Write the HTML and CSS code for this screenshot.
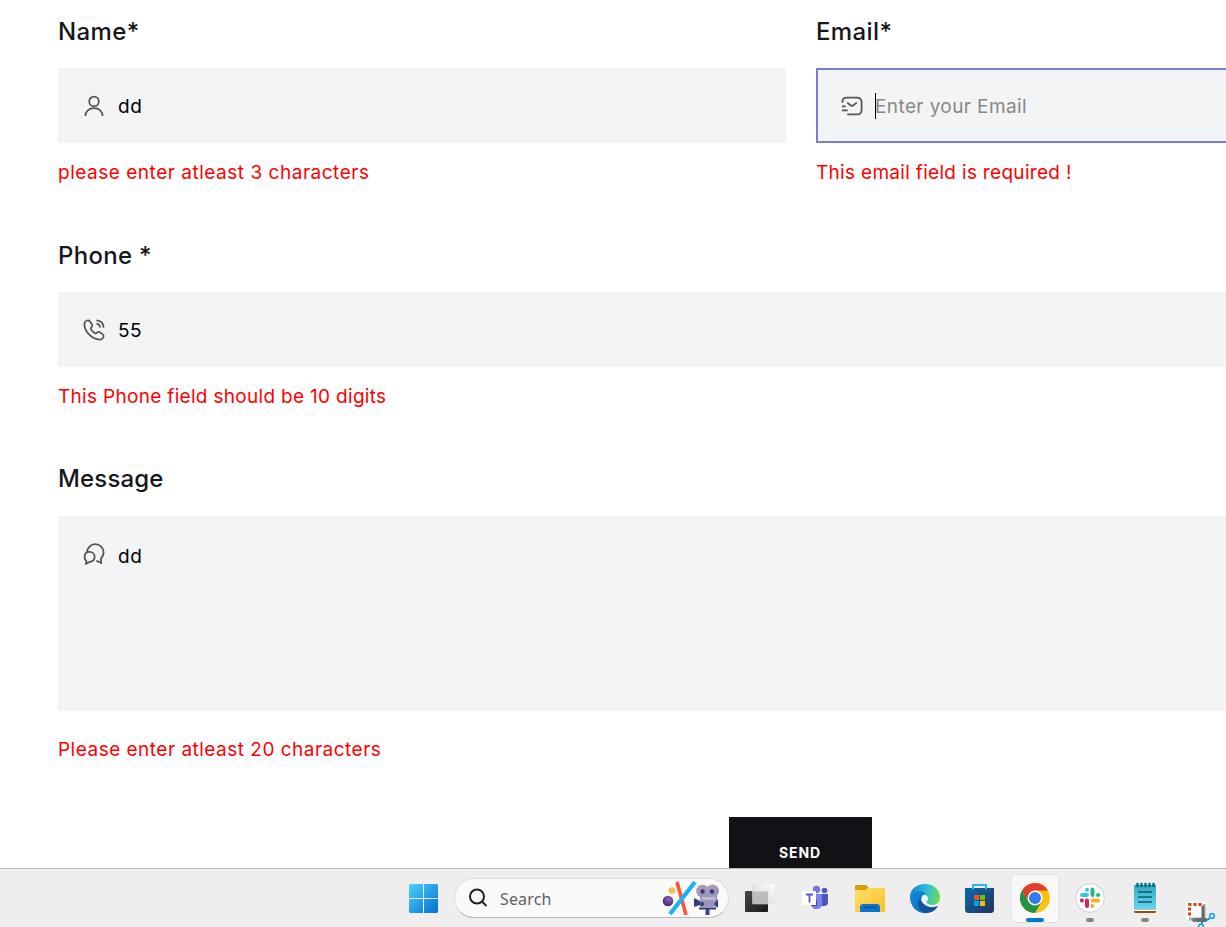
FILE: index.html
```html
<!DOCTYPE html>
<html lang="en">
<head>
<meta charset="utf-8">
<title>Contact form</title>
<link rel="stylesheet" href="styles.css">
</head>
<body>
<main class="page">
  <form class="form">
    <div class="row">
      <div class="group">
        <label class="label label-name">Name*</label>
        <div class="field">
          <svg class="icon" viewBox="-.5 -.5 25 25"><circle cx="12" cy="7.200" r="5"/><path d="M3 22.500c0-5 3.800-8.300 9-8.300s9 3.300 9 8.300"/></svg>
          <span class="value">dd</span>
        </div>
        <p class="error error-name">please enter atleast 3 characters</p>
      </div>
      <div class="group">
        <label class="label label-email">Email*</label>
        <div class="field focused">
          <svg class="icon" viewBox="-.5 -.5 25 25"><path d="M2 8.500V7.500c0-3 1.700-4.300 4.500-4.300H17c3 0 5 1.500 5 5v7.600c0 3.500-2 5-5 5H7M7 8.500l3.300 2.700c.9.700 2.200.7 3 0l3.700-2.700M1.500 16.500h6M1.500 12.300h4"/></svg>
          <span class="caret"></span><span class="placeholder">Enter your Email</span>
        </div>
        <p class="error error-email">This email field is required !</p>
      </div>
    </div>
    <div class="group">
      <label class="label label-phone">Phone *</label>
      <div class="field">
        <svg class="icon" viewBox="-.5 -.5 25 25"><path d="M22 18.300c0 2.100-2 3.700-4.300 3.700C10.500 22 2 13.600 2 6.300 2 4 3.700 2 5.700 2c1 0 1.600.4 2.100 1.100l2 2.900c.7 1.100.6 1.900-.2 2.800l-.7.8c-.4.500-.4.900-.1 1.500.9 1.600 2.500 3.200 4.100 4.200.6.400 1.100.3 1.500-.1l.9-.7c.8-.7 1.800-.8 2.700-.2l2.900 2c.7.5 1.100 1.100 1.100 2zM14.500 2C19 2.200 21.800 5 22 9.500M14.500 5.700c2.300.1 3.700 1.500 3.800 3.800"/></svg>
        <span class="value value-phone">55</span>
      </div>
      <p class="error error-phone">This Phone field should be 10 digits</p>
    </div>
    <div class="group">
      <label class="label label-message">Message</label>
      <div class="field area">
        <svg class="icon" viewBox="-.5 -.5 25 25"><path d="M4.500 10.500C5 5.500 8.500 1.700 13.200 1.700c5 0 8.800 4 8.800 8.800 0 2.300-1 4.600-2.700 6.200l.1 4.500-5-2.200M2.200 15c0-3.200 2.200-5.200 5.200-5.200 3.100 0 5.300 2.200 5.300 5.100 0 3.100-2.300 5.100-5.300 5.300l-3.700 2 .3-3.200c-1.200-1-1.800-2.400-1.800-4z"/></svg>
        <span class="value">dd</span>
      </div>
      <p class="error error-message">Please enter atleast 20 characters</p>
    </div>
    <div class="submit">SEND</div>
  </form>
</main>
<footer class="taskbar">
  <svg class="tile" viewBox="396 869 55 58">
    <defs><linearGradient id="win" x1="409" y1="884" x2="438" y2="913" gradientUnits="userSpaceOnUse"><stop stop-color="#4dd0ff"/><stop offset="1" stop-color="#006fd0"/></linearGradient></defs>
    <path fill="url(#win)" d="M410 884h13v14h-14v-13zM424 884h13l1 1v13h-14zM409 899h14v14h-13l-1-1zM424 899h14v13l-1 1h-13z"/>
  </svg>
  <div class="search">
    <svg class="lens" viewBox="0 0 20 20"><circle cx="9" cy="8.500" r="7"/><path d="M14 13.500l4.500 4.500"/></svg>
    <span class="search-text">Search</span>
    <svg class="art" viewBox="660 879 64 38">
      <defs>
        <linearGradient id="cam" x1="0" y1="0" x2="1" y2="1"><stop stop-color="#b9a0ad"/><stop offset="1" stop-color="#8a8cc8"/></linearGradient>
        <radialGradient id="ball" cx=".6" cy=".3" r=".8"><stop stop-color="#8b62bd"/><stop offset="1" stop-color="#3c2365"/></radialGradient>
      </defs>
      <path d="M678 882L687 915" stroke="#ff5436" stroke-width="3.600"/>
      <path d="M696 882L671 914" stroke="#19b3f5" stroke-width="4.200"/>
      <circle cx="673" cy="890.500" r="3.300" fill="#f6bd55"/><circle cx="669" cy="901" r="5.300" fill="url(#ball)"/>
      <path d="M706.500 908h4v7h-4z" fill="#3d4686"/><path d="M700 907.500h17v2h-17z" fill="#323b79"/>
      <circle cx="703.500" cy="891" r="6.300" fill="url(#cam)"/><circle cx="713.500" cy="891" r="6.500" fill="url(#cam)"/>
      <path d="M701 895h17v12h-17z" fill="#9997bd"/><path d="M703 897h13v3h-13z" fill="#c4bad0"/>
      <path d="M695 898l6 3v4l-6 2zM719 899v9l-4-4z" fill="#343d7e"/>
      <circle cx="703.500" cy="891.500" r="2.200" fill="#333b7a"/><circle cx="713" cy="891.500" r="2.200" fill="#333b7a"/><circle cx="703" cy="904" r="2.200" fill="#404382"/>
    </svg>
  </div>
  <svg class="tile" viewBox="732 869 55 58">
    <defs><linearGradient id="dark" x1="0" y1="0" x2="1" y2="1"><stop stop-color="#4a4a4a"/><stop offset="1" stop-color="#181818"/></linearGradient><linearGradient id="light" x1="0" y1="1" x2="1" y2="0"><stop stop-color="#d0d0d0"/><stop offset="1" stop-color="#fff"/></linearGradient></defs>
    <rect x="745" y="891" width="23" height="21" rx="1" fill="url(#dark)"/><rect x="752.500" y="884" width="22.500" height="20" rx="1" fill="url(#light)" stroke="#ddd" stroke-width=".5"/><path fill="#bcbcbc" d="M753 891.500h15V904h-15z"/>
  </svg>
  <svg class="tile" viewBox="787 869 55 58">
    <circle cx="824.500" cy="890.500" r="2.800" fill="#5059c9"/><path d="M820 894h8v8c0 3-2 4-4 4h-4z" fill="#4b53bc"/>
    <circle cx="816.500" cy="889.500" r="3.700" fill="#7078dd"/><path d="M811 894h11v9c0 4-2 6-5.500 6s-5.500-2-5.500-6z" fill="#7b83eb"/>
    <path d="M812 900h5v6h-6z" fill="#4149a5"/><path d="M802 891h14v14h-14z" fill="#fff"/><path d="M806 894.500h7M809.500 894.500v8" stroke="#5059c9" stroke-width="1.800"/>
  </svg>
  <svg class="tile" viewBox="842 869 55 58">
    <defs><linearGradient id="fold" x1="0" y1="0" x2="1" y2="1"><stop stop-color="#ffdf70"/><stop offset="1" stop-color="#ffc01f"/></linearGradient></defs>
    <path d="M856 885h10l3 3h15l1 3h-30v-5z" fill="#d99c05"/><path d="M855 890h10l3-2h16l1 1v22l-1 1h-28l-1-1z" fill="url(#fold)"/><path d="M860 912v-6l2-2h16l2 2v6z" fill="#0874d0"/><path d="M863.500 907.500h13" stroke="#073f87" stroke-width="1.200"/>
  </svg>
  <svg class="tile" viewBox="897 869 55 58">
    <defs>
      <linearGradient id="edge-top" x1="911" y1="890" x2="940" y2="897" gradientUnits="userSpaceOnUse"><stop stop-color="#1585d1"/><stop offset=".5" stop-color="#2bbfdb"/><stop offset="1" stop-color="#6ddb4e"/></linearGradient>
      <linearGradient id="edge-low" x1="910" y1="895" x2="930" y2="913" gradientUnits="userSpaceOnUse"><stop stop-color="#0b89d8"/><stop offset="1" stop-color="#1467ba"/></linearGradient>
    </defs>
    <path d="M910 897c0-8 7-13 15-13 9 0 15 6 15 13 0 6-4 8-8 8-4 0-6-1-6-3 0-1 2-2 2-4 0-3-3-6-8-6-5 0-9 2-10 5z" fill="url(#edge-top)"/>
    <path d="M910 897c1-4 5-6 9-6 6 0 9 4 9 7-1-1-2-1-3-1-4 0-5 4-3 8 2 5 7 7 8 7-9 4-20-3-20-15z" fill="url(#edge-low)"/>
    <path d="M920 898c-4 6-1 14 6 15 5 0 9-2 12-7-8 3-15 0-18-8z" fill="#15509a"/>
    <path d="M925 894.500c-3 0-4 3-3 6 1 3 5 6 9 6 3 0 5-.5 7-1.500-5 1-10 0-12-3 1-1 2-2 2-4 0-1-1-3-3-3.500z" fill="#eef5f7"/>
  </svg>
  <svg class="tile" viewBox="952 869 55 58">
    <defs><linearGradient id="store" x1="0" y1="0" x2="1" y2="1"><stop stop-color="#0669ae"/><stop offset="1" stop-color="#26345b"/></linearGradient></defs>
    <path d="M965 888h29v21c0 3-1 4-4 4h-21c-3 0-4-1-4-4z" fill="url(#store)"/><path d="M973 889.500v-4.500h13v4.500" fill="none" stroke="#27b8ed" stroke-width="2"/>
    <path d="M974 895h5v5h-5z" fill="#f25022"/><path d="M980 895h5v5h-5z" fill="#7fba00"/><path d="M974 901h5v5h-5z" fill="#00a4ef"/><path d="M980 901h5v5h-5z" fill="#ffb900"/>
  </svg>
  <svg class="tile" viewBox="1007 869 55 58">
    <rect x="1011" y="874.500" width="48" height="48" rx="4" fill="#f8f8f8" stroke="#e0e0e0"/>
    <circle cx="1035" cy="898" r="15" fill="#fbc116"/><path d="M1022 890.500a15 15 0 0 1 26 0h-13l-6.500 11.300z" fill="#e33b2e"/><path d="M1022 890.500a15 15 0 0 0 13 22.500l6.500-11.300-13 .1z" fill="#229342"/>
    <circle cx="1035" cy="898" r="7.500" fill="#fff"/><circle cx="1035" cy="898" r="6" fill="#327bea"/><rect x="1026" y="918" width="18" height="4" rx="2" fill="#0078d4"/>
  </svg>
  <svg class="tile" viewBox="1062 869 55 58">
    <circle cx="1090" cy="898" r="14.300" fill="#fff" stroke="#d0d0d0"/>
    <g fill="none" stroke-width="4" stroke-linecap="round"><path d="M1082 895h5M1087 889.700v.1" stroke="#36c5f0"/><path d="M1092.500 889.500v5.500M1098 895h.1" stroke="#2eb67d"/><path d="M1092.500 900.500h5.500M1092.500 906v.1" stroke="#ecb22e"/><path d="M1087 900.500v5.500M1081.800 900.500h.1" stroke="#e01e5a"/></g>
    <rect x="1086" y="918" width="8" height="4" rx="2" fill="#858585"/>
  </svg>
  <svg class="tile" viewBox="1117 869 55 58">
    <defs><linearGradient id="note" x1="0" y1="0" x2="0" y2="1"><stop stop-color="#35a9c4"/><stop offset="1" stop-color="#65d6ee"/></linearGradient></defs>
    <path d="M1134 909h22v3l-1 1h-20l-1-1z" fill="#9c4b0d"/><path d="M1134 885h22v24.500h-22z" fill="url(#note)"/><path d="M1134 909.500h22v1.500h-22z" fill="#fff"/>
    <path d="M1138 892h14M1138 897h14M1138 902h14" stroke="#075d75" stroke-width="1.700"/><path d="M1137.500 884v2M1141.500 884v2M1145.500 884v2M1149.500 884v2M1153.500 884v2" stroke="#086581" stroke-width="2.500" stroke-linecap="round"/>
    <rect x="1141" y="918" width="8" height="4" rx="2" fill="#858585"/>
  </svg>
  <svg class="tile" viewBox="1172 869 55 58">
    <rect x="1186" y="901" width="20" height="19" rx="2" fill="#fafafa"/><path d="M1204 904v15h-15" fill="none" stroke="#aaa" stroke-width="3"/>
    <path d="M1201.500 904.500H1189.500V916" fill="none" stroke="#d34413" stroke-width="3" stroke-dasharray="3 2"/>
    <rect x="1192" y="918" width="15" height="4" rx="2" fill="#777"/><path d="M1203 906v16M1197 920h10" stroke="#656a6f" stroke-width="3"/>
    <path d="M1207 920l3-2M1202 922v3" stroke="#148fcf" stroke-width="2"/><circle cx="1212" cy="916" r="2.300" fill="none" stroke="#24a4e4" stroke-width="1.700"/><circle cx="1201" cy="926.500" r="2.300" fill="none" stroke="#24a4e4" stroke-width="1.700"/>
  </svg>
</footer>
</body>
</html>
```
FILE: styles.css
```css
* { box-sizing: border-box; }
body { margin: 0; width: 1226px; height: 927px; overflow: hidden; background: #fff; font-family: Inter, "Liberation Sans", sans-serif; }
.page { height: 868px; padding: 12px 0 0 58px; overflow: hidden; }
.form { display: flex; flex-direction: column; gap: 49px; width: 1486px; }
.row { display: grid; grid-template-columns: 728px 728px; gap: 30px; }
.group { display: flex; flex-direction: column; }
.label { height: 38px; margin-bottom: 18px; line-height: 40px; font-size: 24px; font-weight: 500; color: #16171c; white-space: nowrap; }
.label-name, .label-email { letter-spacing: .4px; }
.label-phone { letter-spacing: .3px; }
.label-message { line-height: 38px; letter-spacing: .15px; }
.field { display: flex; align-items: center; height: 75px; padding-left: 24px; background: #f3f4f6; border: 0 solid #777ed3; }
.focused { border-width: 2px; padding-left: 22px; }
.area { height: 195px; align-items: flex-start; padding-top: 26px; }
.icon { width: 24px; height: 24px; flex: none; fill: none; stroke: #555; stroke-width: 1.85; }
.value, .placeholder { padding-top: 2px; font-size: 19px; line-height: 30px; margin-left: 12px; letter-spacing: .5px; color: #000; white-space: nowrap; }
.area .value { padding-top: 0; }
.caret { width: 1px; height: 26px; margin-left: 11px; background: #000; }
.placeholder { margin-left: -1px; letter-spacing: .4px; color: #888; }
.error { height: 30px; margin: 14px 0 0; font-size: 19px; line-height: 32px; color: #f00; white-space: nowrap; }
.error-name { letter-spacing: .52px; }
.error-email, .error-phone { letter-spacing: .31px; }
.error-message { margin-top: 23px; letter-spacing: .49px; }
.submit { align-self: center; width: 143px; height: 72px; margin: 4px 2px 0 0; line-height: 72px; text-align: center; font-size: 14px; font-weight: 700; letter-spacing: .9px; color: #fff; background: #121216; }
.taskbar { display: flex; height: 59px; padding-left: 396px; overflow: hidden; background: #eee; border-top: 1px solid #bababa; }
.tile { width: 55px; height: 58px; flex: none; }
.search { display: flex; align-items: center; flex: none; width: 275px; height: 40px; margin: 9px 3px 0 3px; padding-left: 13px; border: 1px solid #ddd; border-bottom-color: #bbb; border-radius: 20px; background: #fafafa; }
.lens { width: 20px; height: 20px; fill: none; stroke: #222; stroke-width: 2; }
.search-text { width: 159px; margin-left: 12px; padding-top: 1px; font-family: "Noto Sans", sans-serif; font-size: 16px; line-height: 24px; letter-spacing: .15px; color: #606060; }
.art { width: 64px; height: 38px; flex: none; }
```
